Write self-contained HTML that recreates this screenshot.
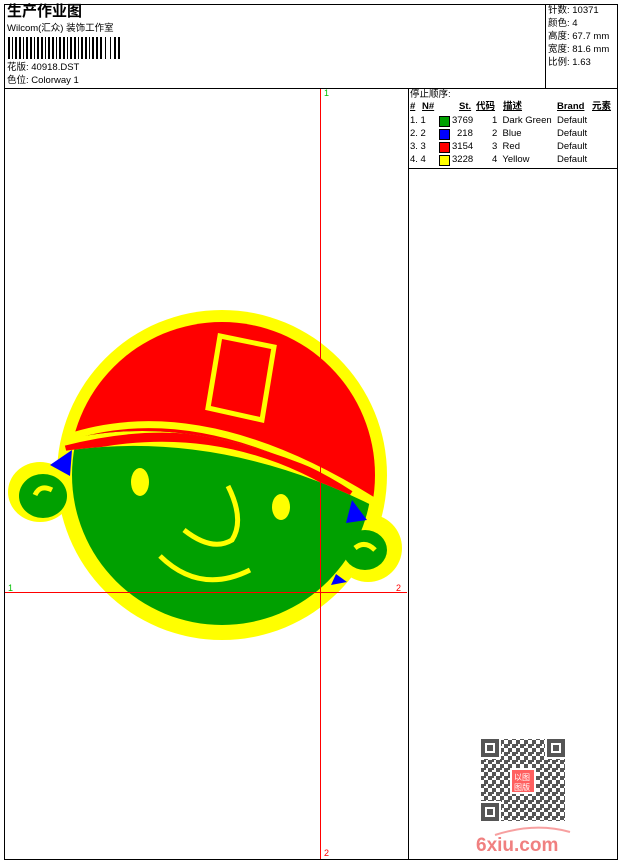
<!DOCTYPE html><html><head><meta charset="utf-8"><style>
body{margin:0;width:620px;height:860px;background:#fff;position:relative;overflow:hidden;font-family:"Liberation Sans","Noto Sans CJK SC",sans-serif;font-size:9.5px;color:#000}
.a{position:absolute;white-space:nowrap;line-height:12px}
.l{position:absolute;background:#000}
u{text-decoration:underline;font-weight:bold}
.sw{position:absolute;width:9px;height:9px;border:1px solid #000}
</style></head><body>
<div class="l" style="left:4px;top:4px;width:613px;height:1px"></div>
<div class="l" style="left:4px;top:4px;width:1px;height:856px"></div>
<div class="l" style="left:617px;top:4px;width:1px;height:856px"></div>
<div class="l" style="left:4px;top:859px;width:614px;height:1px"></div>
<div class="l" style="left:4px;top:88px;width:613px;height:1px"></div>
<div class="l" style="left:545px;top:4px;width:1px;height:84px"></div>
<div class="l" style="left:408px;top:88px;width:1px;height:772px"></div>
<div class="l" style="left:408px;top:168px;width:209px;height:1px"></div>

<div class="a" style="left:7px;top:3px;font-size:15px;font-weight:bold;line-height:18px">生产作业图</div>
<div class="a" style="left:7px;top:23px">Wilcom(汇众) 装饰工作室</div>
<svg style="position:absolute;left:8px;top:37px" width="115" height="22">
<g fill="#000">
<rect x="0" width="2" height="22"/><rect x="4" width="1" height="22"/><rect x="7" width="2" height="22"/><rect x="11" width="2" height="22"/><rect x="15" width="1" height="22"/><rect x="18" width="2" height="22"/><rect x="22" width="2" height="22"/><rect x="26" width="1" height="22"/><rect x="29" width="2" height="22"/><rect x="33" width="2" height="22"/><rect x="37" width="1" height="22"/><rect x="40" width="2" height="22"/><rect x="44" width="2" height="22"/><rect x="48" width="1" height="22"/><rect x="51" width="2" height="22"/><rect x="55" width="2" height="22"/><rect x="59" width="1" height="22"/><rect x="62" width="2" height="22"/><rect x="66" width="2" height="22"/><rect x="70" width="1" height="22"/><rect x="73" width="2" height="22"/><rect x="77" width="2" height="22"/><rect x="81" width="1" height="22"/><rect x="84" width="2" height="22"/><rect x="88" width="2" height="22"/><rect x="92" width="2" height="22"/><rect x="97" width="1" height="22"/><rect x="102" width="1" height="22"/><rect x="106" width="2" height="22"/><rect x="110" width="2" height="22"/></g></svg>
<div class="a" style="left:7px;top:62px">花版: 40918.DST</div>
<div class="a" style="left:7px;top:75px">色位: Colorway 1</div>

<div class="a" style="left:548px;top:5px">针数: 10371</div>
<div class="a" style="left:548px;top:18px">颜色: 4</div>
<div class="a" style="left:548px;top:31px">高度: 67.7 mm</div>
<div class="a" style="left:548px;top:44px">宽度: 81.6 mm</div>
<div class="a" style="left:548px;top:57px">比例: 1.63</div>

<div class="a" style="left:410px;top:89px">停止顺序:</div>
<div class="a" style="left:410px;top:101px"><u>#</u></div>
<div class="a" style="left:422px;top:101px"><u>N#</u></div>
<div class="a" style="left:459px;top:101px"><u>St.</u></div>
<div class="a" style="left:476px;top:101px"><u>代码</u></div>
<div class="a" style="left:503px;top:101px"><u>描述</u></div>
<div class="a" style="left:557px;top:101px"><u>Brand</u></div>
<div class="a" style="left:592px;top:101px"><u>元素</u></div>

<div class="a" style="left:410px;top:115px">1. 1</div><div class="sw" style="left:439px;top:116px;background:#00a000"></div><div class="a" style="left:452px;top:115px">3769</div><div class="a" style="left:492px;top:115px">1&nbsp; Dark Green</div><div class="a" style="left:557px;top:115px">Default</div>
<div class="a" style="left:410px;top:128px">2. 2</div><div class="sw" style="left:439px;top:129px;background:#0000ff"></div><div class="a" style="left:457px;top:128px">218</div><div class="a" style="left:492px;top:128px">2&nbsp; Blue</div><div class="a" style="left:557px;top:128px">Default</div>
<div class="a" style="left:410px;top:141px">3. 3</div><div class="sw" style="left:439px;top:142px;background:#ff0000"></div><div class="a" style="left:452px;top:141px">3154</div><div class="a" style="left:492px;top:141px">3&nbsp; Red</div><div class="a" style="left:557px;top:141px">Default</div>
<div class="a" style="left:410px;top:154px">4. 4</div><div class="sw" style="left:439px;top:155px;background:#ffff00"></div><div class="a" style="left:452px;top:154px">3228</div><div class="a" style="left:492px;top:154px">4&nbsp; Yellow</div><div class="a" style="left:557px;top:154px">Default</div>

<svg style="position:absolute;left:0;top:0" width="620" height="860">
<defs>
<clipPath id="cap"><path d="M40,447 Q200,395 400,512 L400,290 L40,290Z"/></clipPath>
<clipPath id="strip"><path d="M40,447 Q200,395 400,512 L400,520 Q220,420 40,455Z"/></clipPath>
<pattern id="qr" width="8" height="8" patternUnits="userSpaceOnUse"><rect width="4" height="4" fill="#555"/><rect x="4" y="4" width="4" height="4" fill="#555"/><rect x="4" y="0" width="2" height="2" fill="#555"/></pattern>
</defs>
<g fill="#ffff00">
<circle cx="222" cy="475" r="165"/>
<ellipse cx="40" cy="492" rx="32" ry="30"/>
<ellipse cx="368" cy="548" rx="34" ry="34"/>
</g>
<g fill="#00a000">
<circle cx="222" cy="475" r="150"/>
<ellipse cx="43" cy="496" rx="24" ry="22"/>
<ellipse cx="365" cy="550" rx="22" ry="20"/>
</g>
<circle cx="222" cy="475" r="152" fill="#ffff00" clip-path="url(#strip)"/>
<circle cx="222" cy="475" r="153" fill="#ff0000" clip-path="url(#cap)"/>
<path d="M66,438 Q200,393 372,500" stroke="#ffff00" stroke-width="7" fill="none"/>
<path d="M66,450 Q220,410 350,495" stroke="#ff0000" stroke-width="9" fill="none" clip-path="url(#strip)"/>
<polygon points="220,336 274,347 262,420 208,408" fill="none" stroke="#ffff00" stroke-width="5"/>
<ellipse cx="140" cy="482" rx="9" ry="14" fill="#ffff00"/>
<ellipse cx="281" cy="507" rx="9" ry="13" fill="#ffff00"/>
<path d="M228,486 Q245,520 232,540 Q212,552 184,530" stroke="#ffff00" stroke-width="5" fill="none"/>
<path d="M160,556 Q200,595 250,570" stroke="#ffff00" stroke-width="5" fill="none"/>
<path d="M35,495 Q40,484 52,490" stroke="#ffff00" stroke-width="5" fill="none"/>
<path d="M355,548 Q365,540 375,550" stroke="#ffff00" stroke-width="5" fill="none"/>
<polygon points="50,465 72,450 70,476" fill="#0000ff"/>
<polygon points="352,500 367,520 346,523" fill="#0000ff"/>
<polygon points="336,574 347,582 331,585" fill="#0000ff"/>
<line x1="5" y1="592.5" x2="407" y2="592.5" stroke="#ff0000"/>
<line x1="320.5" y1="89" x2="320.5" y2="859" stroke="#ff0000"/>
<text x="8" y="591" fill="#00c000" font-size="9" font-family="Liberation Sans">1</text>
<text x="396" y="591" fill="#ff0000" font-size="9" font-family="Liberation Sans">2</text>
<text x="324" y="96" fill="#00c000" font-size="9" font-family="Liberation Sans">1</text>
<text x="324" y="856" fill="#ff0000" font-size="9" font-family="Liberation Sans">2</text>
<rect x="481" y="739" width="84" height="82" fill="url(#qr)"/>
<g fill="#555">
<rect x="479" y="737" width="22" height="22" fill="#fff"/><rect x="545" y="737" width="22" height="22" fill="#fff"/><rect x="479" y="801" width="22" height="22" fill="#fff"/>
<rect x="481" y="739" width="18" height="18"/><rect x="485" y="743" width="10" height="10" fill="#fff"/><rect x="487" y="745" width="6" height="6"/>
<rect x="547" y="739" width="18" height="18"/><rect x="551" y="743" width="10" height="10" fill="#fff"/><rect x="553" y="745" width="6" height="6"/>
<rect x="481" y="803" width="18" height="18"/><rect x="485" y="807" width="10" height="10" fill="#fff"/><rect x="487" y="809" width="6" height="6"/>
</g>
<rect x="510" y="768" width="26" height="26" fill="#fff"/>
<rect x="512" y="770" width="22" height="22" fill="#ff6060"/>
<text x="514" y="780" fill="#fff" font-size="8" font-family="Noto Sans CJK SC">以图</text>
<text x="514" y="790" fill="#fff" font-size="8" font-family="Noto Sans CJK SC">图版</text>
<path d="M495,835 Q535,822 570,832" stroke="#f7a0a0" stroke-width="2" fill="none"/>
<text x="476" y="851" fill="#f08080" font-size="19" font-weight="bold" font-family="Liberation Sans">6xiu.com</text>
</svg>
</body></html>
